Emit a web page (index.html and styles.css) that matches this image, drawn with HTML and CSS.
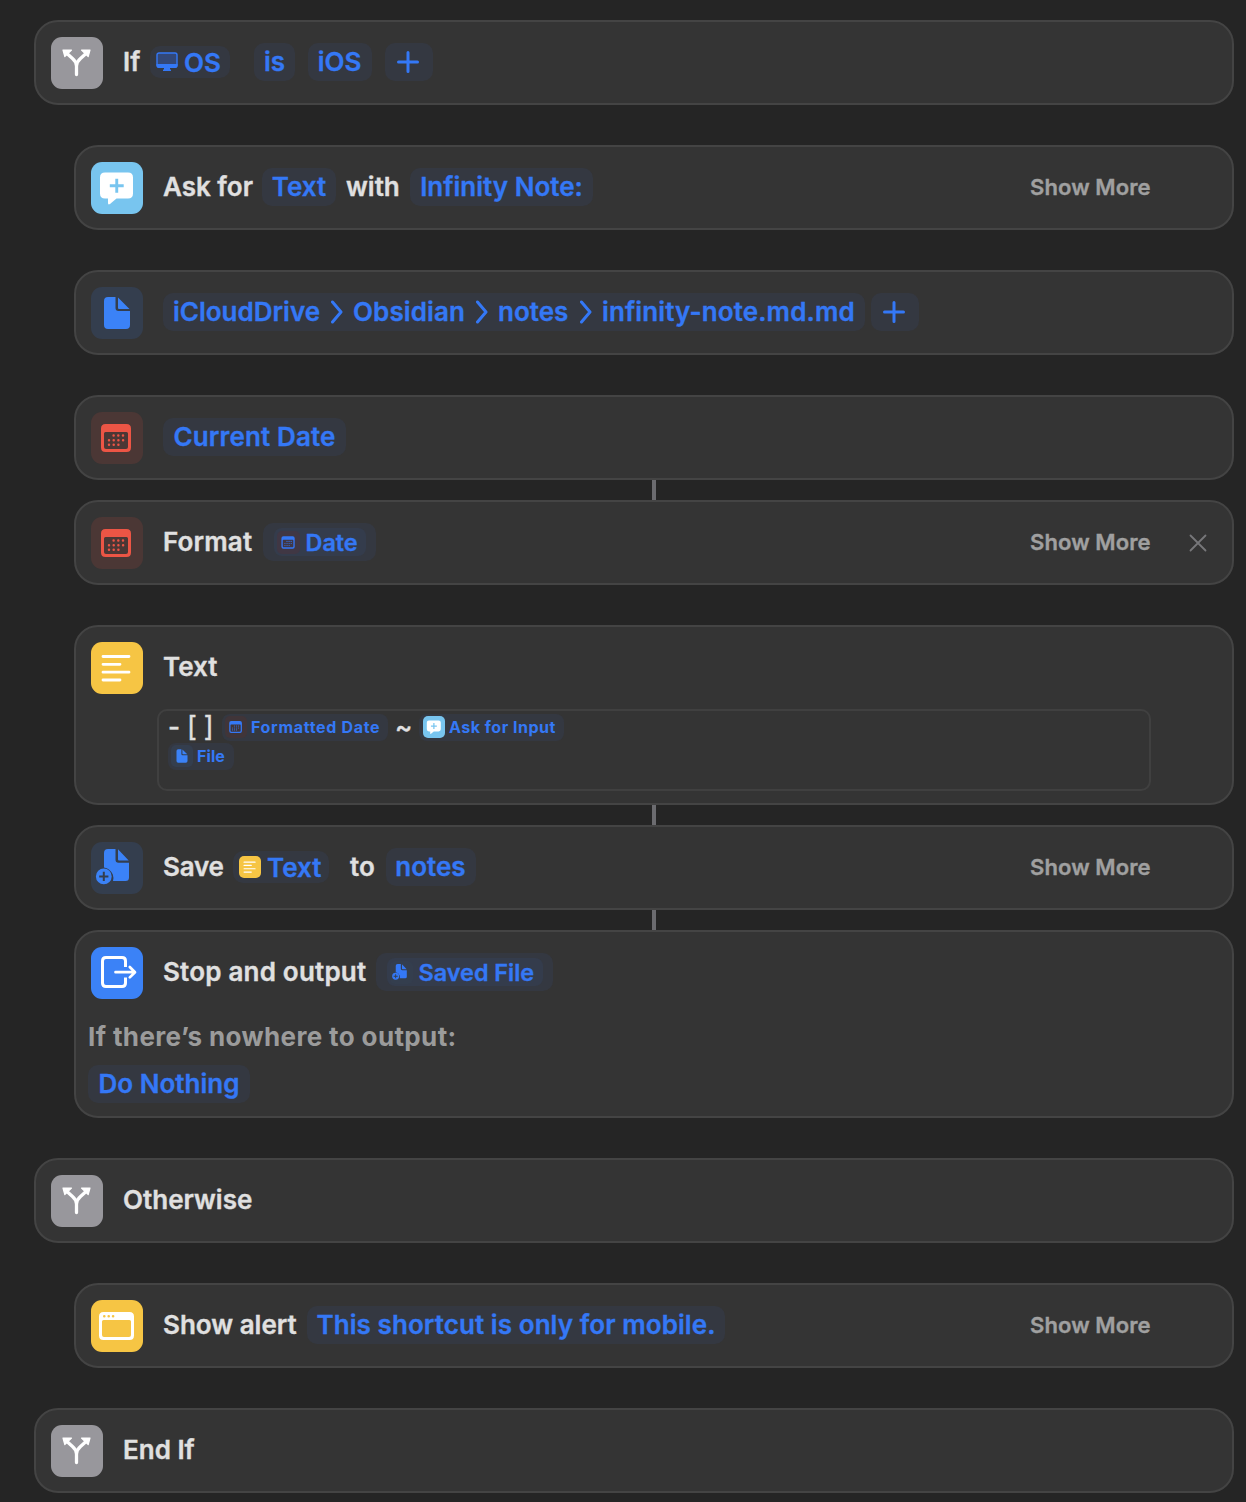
FILE: index.html
```html
<!DOCTYPE html>
<html lang="en">
<head>
<meta charset="utf-8">
<title>Shortcut</title>
<link rel="stylesheet" href="styles.css">
</head>
<body>
<svg class="sprite" aria-hidden="true">
  <symbol id="branch" viewBox="0 0 52 52">
    <path d="M25.5 37.5V29Q25.5 25 21.5 21.500L16.500 17M25.500 29Q25.500 25 29.500 21.500L34.500 17" fill="none" stroke="currentColor" stroke-width="3.300" stroke-linecap="round"/>
    <path d="M12 13H20.500L13.800 19.500ZM39 13H30.500L37.200 19.500Z" fill="currentColor" stroke="currentColor" stroke-width="1.200" stroke-linejoin="round"/>
  </symbol>
  <symbol id="bubble" viewBox="0 0 52 52">
    <path fill="currentColor" fill-rule="evenodd" d="M14 10.500H37Q42 10.500 42 15.500V31.500Q42 36.500 37 36.500H25.500L19 42Q17 43.200 17 41V36.500H14Q9 36.500 9 31.500V15.500Q9 10.500 14 10.500ZM24.300 16.800V22.300H18.800V25.200H24.300V30.700H27.200V25.200H32.700V22.300H27.200V16.800Z"/>
  </symbol>
  <symbol id="doc" viewBox="0 0 52 52">
    <path fill="currentColor" d="M17 10H24.500V21Q24.500 24 27.500 24H39V38Q39 42 35 42H17Q13 42 13 38V14Q13 10 17 10ZM27 10.400L38.500 21.900H28Q27 21.900 27 20.900Z"/>
  </symbol>
  <symbol id="calendar" viewBox="0 0 52 52">
    <path fill="currentColor" fill-rule="evenodd" d="M14.500 12H35.500Q40 12 40 16.500V35.500Q40 40 35.500 40H14.500Q10 40 10 35.500V16.500Q10 12 14.500 12ZM14.500 20Q13 20 13 21.500V35Q13 37 15 37H35Q37 37 37 35V21.500Q37 20 35.500 20Z"/>
    <path d="M22.600 23.500H33M18 28.200H33M18 32.800H28" fill="none" stroke="currentColor" stroke-width="2.500" stroke-linecap="round" stroke-dasharray="0 4.700"/>
  </symbol>
  <symbol id="lines" viewBox="0 0 52 52">
    <path d="M12 14.500H38M12 22.300H29M12 30.200H38M12 38H29" fill="none" stroke="currentColor" stroke-width="2.800" stroke-linecap="round"/>
  </symbol>
  <symbol id="docplus" viewBox="0 0 52 52">
    <path fill="currentColor" d="M17 7H24.500V17.500Q24.500 20.800 27.500 20.800H38V35.500Q38 39 34.500 39H22Q23 36 21.800 32.500Q19 26.500 13 25.500V11Q13 7 17 7ZM27 7.300L37.700 18.500H28Q27 18.500 27 17.500Z"/>
    <path fill="currentColor" fill-rule="evenodd" d="M12.800 26.500A7.900 7.900 0 1 1 12.800 42.300A7.900 7.900 0 1 1 12.800 26.500ZM11.800 29.800V33.400H8.200V35.400H11.800V39H13.800V35.400H17.400V33.400H13.800V29.800Z"/>
  </symbol>
  <symbol id="exit" viewBox="0 0 52 52">
    <path d="M34.500 20V14Q34.500 10.500 31 10.500H15Q11.500 10.500 11.500 14V36Q11.500 39.500 15 39.500H31Q34.500 39.500 34.500 36V30.400" fill="none" stroke="currentColor" stroke-width="3"/>
    <path d="M24.500 25.200H43.500M38.800 20L44 25.200L38.800 30.400" fill="none" stroke="currentColor" stroke-width="2.700" stroke-linecap="round" stroke-linejoin="round"/>
  </symbol>
  <symbol id="window" viewBox="0 0 52 52">
    <path fill="currentColor" fill-rule="evenodd" d="M12.500 12H38.500Q43 12 43 16.500V35.500Q43 40 38.500 40H12.500Q8 40 8 35.500V16.500Q8 12 12.500 12ZM12.500 20Q11 20 11 21.500V35Q11 37 13 37H38Q40 37 40 35V21.500Q40 20 38.500 20Z"/>
    <path d="M13.300 16.200H23" fill="none" stroke="#f6c544" stroke-width="2.600" stroke-linecap="round" stroke-dasharray="0 4.400"/>
  </symbol>
  <symbol id="display" viewBox="0 0 22 20">
    <rect x="1" y="1" width="20" height="14" rx="2" fill="#334878" stroke="currentColor" stroke-width="1.400"/>
    <path fill="currentColor" d="M.5 12H21.500V14Q21.500 16 19.500 16H14V17L15 18V19H7V18L8 17V16H2.500Q.5 16 .5 14Z"/>
  </symbol>
  <symbol id="plus" viewBox="0 0 22 22">
    <path d="M11 1.500V20.500M1.500 11H20.500" fill="none" stroke="currentColor" stroke-width="3" stroke-linecap="round"/>
  </symbol>
  <symbol id="chevron" viewBox="0 0 12 24">
    <path d="M1.500 2L10 12L1.500 22" fill="none" stroke="currentColor" stroke-width="3" stroke-linecap="round" stroke-linejoin="round"/>
  </symbol>
</svg>

<main class="flow">
  <section class="card">
    <header class="row">
      <span class="tile gray"><svg><use href="#branch"/></svg></span>
      <div class="phrase">
        <span class="word w-if">If</span>
        <span class="token variable os"><svg class="display"><use href="#display"/></svg><span>OS</span></span>
        <span class="token is">is</span>
        <span class="token ios">iOS</span>
        <span class="token add"><svg><use href="#plus"/></svg></span>
      </div>
    </header>
  </section>

  <section class="card nested">
    <header class="row">
      <span class="tile sky"><svg><use href="#bubble"/></svg></span>
      <div class="phrase">
        <span class="word w-ask">Ask for</span>
        <span class="token t-text">Text</span>
        <span class="word w-with">with</span>
        <span class="token t-prompt">Infinity Note:</span>
      </div>
      <span class="more">Show More</span>
    </header>
  </section>

  <section class="card nested">
    <header class="row">
      <span class="tile navy"><svg><use href="#doc"/></svg></span>
      <div class="phrase">
        <span class="token path">
          <span class="p-drive">iCloudDrive</span><svg><use href="#chevron"/></svg>
          <span class="p-vault">Obsidian</span><svg><use href="#chevron"/></svg>
          <span class="p-notes">notes</span><svg><use href="#chevron"/></svg>
          <span class="p-file">infinity-note.md.md</span>
        </span>
        <span class="token add tight"><svg><use href="#plus"/></svg></span>
      </div>
    </header>
  </section>

  <section class="card nested">
    <header class="row">
      <span class="tile maroon"><svg><use href="#calendar"/></svg></span>
      <div class="phrase"><span class="token t-current">Current Date</span></div>
    </header>
  </section>
  <div class="link"></div>

  <section class="card nested">
    <header class="row">
      <span class="tile maroon"><svg><use href="#calendar"/></svg></span>
      <div class="phrase">
        <span class="word w-format">Format</span>
        <span class="token wrap t-date"><span class="inner"><span class="tile mini maroon"><svg><use href="#calendar"/></svg></span><span class="label">Date</span></span></span>
      </div>
      <span class="more">Show More</span>
      <svg class="close" viewBox="0 0 18 18"><path d="M1.500 1.500L16.500 16.500M16.500 1.500L1.500 16.500" fill="none" stroke="currentColor" stroke-width="1.800" stroke-linecap="round"/></svg>
    </header>
  </section>

  <section class="card nested text-card">
    <header class="row">
      <span class="tile yellow"><svg><use href="#lines"/></svg></span>
      <div class="phrase"><span class="word">Text</span></div>
    </header>
    <div class="editor">
      <div class="line">
        <span class="dash">-</span><span class="brackets">[ ]</span>
        <span class="chip c-date"><span class="tile mini maroon"><svg><use href="#calendar"/></svg></span><span>Formatted Date</span></span>
        <span class="tilde">~</span>
        <span class="chip c-ask"><span class="tile mini sky"><svg><use href="#bubble"/></svg></span><span>Ask for Input</span></span>
      </div>
      <div class="line second">
        <span class="chip c-file"><span class="tile mini navy"><svg><use href="#doc"/></svg></span><span>File</span></span>
      </div>
    </div>
  </section>
  <div class="link"></div>

  <section class="card nested">
    <header class="row">
      <span class="tile navy"><svg><use href="#docplus"/></svg></span>
      <div class="phrase">
        <span class="word w-save">Save</span>
        <span class="token variable v-text"><span class="tile mini yellow"><svg><use href="#lines"/></svg></span><span>Text</span></span>
        <span class="word w-to">to</span>
        <span class="token t-notes">notes</span>
      </div>
      <span class="more">Show More</span>
    </header>
  </section>
  <div class="link"></div>

  <section class="card nested stop-card">
    <header class="row">
      <span class="tile blue"><svg><use href="#exit"/></svg></span>
      <div class="phrase">
        <span class="word w-stop">Stop and output</span>
        <span class="token wrap t-saved"><span class="inner"><span class="tile mini navy"><svg><use href="#docplus"/></svg></span><span class="label">Saved File</span></span></span>
      </div>
    </header>
    <div class="fallback">
      <span class="note">If there’s nowhere to output:</span>
      <span class="token t-nothing">Do Nothing</span>
    </div>
  </section>

  <section class="card">
    <header class="row">
      <span class="tile gray"><svg><use href="#branch"/></svg></span>
      <div class="phrase"><span class="word">Otherwise</span></div>
    </header>
  </section>

  <section class="card nested">
    <header class="row">
      <span class="tile yellow"><svg><use href="#window"/></svg></span>
      <div class="phrase">
        <span class="word w-alert">Show alert</span>
        <span class="token t-alert">This shortcut is only for mobile.</span>
      </div>
      <span class="more">Show More</span>
    </header>
  </section>

  <section class="card">
    <header class="row">
      <span class="tile gray"><svg><use href="#branch"/></svg></span>
      <div class="phrase"><span class="word">End If</span></div>
    </header>
  </section>
</main>
</body>
</html>
```
FILE: styles.css
```css
* { box-sizing: border-box; }

body {
  margin: 0;
  background: #252525;
  color: #e0e0e0;
  font: 600 26px/38px Inter, "Liberation Sans", sans-serif;
  -webkit-text-stroke: .35px;
  white-space: nowrap;
}

svg { display: block; flex: none; }
.sprite { position: absolute; width: 0; height: 0; }

.flow { display: flex; flex-direction: column; padding: 20px 12px 9px 34px; }

.card {
  height: 85px;
  padding: 15px;
  border: 2px solid #444;
  border-radius: 24px;
  background: #343434;
}
.card + .card { margin-top: 40px; }
.nested { margin-left: 40px; }
.text-card { height: 180px; }
.stop-card { height: 188px; }

.link { width: 4px; height: 20px; margin-left: 618px; background: #6c6c70; }

.row { display: flex; align-items: center; height: 52px; }
.phrase { display: flex; align-items: center; flex: 1; height: 38px; margin: 0 0 2px 20px; }
.word { flex: none; }

.tile { display: block; flex: none; width: 52px; height: 52px; border-radius: 11px; color: #fff; }
.tile svg { width: 100%; height: 100%; }
.gray { background: #98979c; }
.sky { background: #78c5ef; }
.navy { background: #343e4e; color: #3b82f7; }
.maroon { background: #4b3735; color: #ec5545; }
.yellow { background: #f6c544; }
.blue { background: #3b82f7; }

.token {
  display: flex;
  align-items: center;
  justify-content: center;
  flex: none;
  height: 38px;
  border-radius: 10px;
  background: #343841;
  color: #3478f6;
}
.variable { height: 32px; justify-content: flex-start; }
.variable > span:last-child { padding-top: 2px; }

.add { width: 48px; margin-left: 13px; padding-right: 2px; }
.add svg { width: 22px; height: 22px; }
.add.tight { margin-left: 6px; }

.w-if { width: 27px; }
.os { width: 80px; padding-left: 6px; gap: 6px; }
.display { width: 22px; height: 20px; }
.is { width: 41px; margin-left: 24px; }
.ios { width: 64px; margin-left: 13px; padding-right: 1px; }

.w-ask { width: 99px; }
.t-text { width: 74px; }
.w-with { width: 74px; padding-left: 10px; }
.t-prompt { width: 183px; }

.path { width: 702px; padding-left: 10px; justify-content: flex-start; }
.path svg { width: 12px; height: 24px; margin-right: 10px; }
.p-drive { width: 158px; }
.p-vault { width: 123px; letter-spacing: .1px; }
.p-notes { width: 82px; }
.p-file { letter-spacing: .12px; }

.t-current { width: 183px; letter-spacing: .15px; }

.w-format { width: 100px; letter-spacing: .15px; }
.wrap { font-size: 23.400px; }
.inner { display: flex; align-items: center; gap: 6px; height: 28px; padding-left: 3px; border-radius: 8px; background: #343c4c; }
.label { padding-top: 2px; }
.t-date { width: 113px; }
.t-date .inner { width: 92px; }
.t-saved { width: 177px; }
.t-saved .inner { width: 156px; }

.mini { width: 22px; height: 22px; border-radius: 5px; }
.inner .mini { width: 23px; height: 23px; color: #3478f6; }
.inner .maroon { background: #403744; }

.more { flex: none; width: 120px; margin-right: 67px; margin-bottom: 2px; color: #a0a0a0; font-size: 22px; letter-spacing: .1px; }
.more:has(+ .close) { margin-right: 39px; }
.close { width: 18px; height: 18px; margin-right: 10px; color: #77777a; }

.editor {
  width: 994px;
  height: 82px;
  margin: 15px 0 0 66px;
  padding: 2px 10px;
  border: 2px solid #404040;
  border-radius: 10px;
  font-weight: 400;
}
.line { display: flex; align-items: center; height: 28px; }
.line.second { margin-top: 1px; }
.dash { width: 19px; margin-left: -1px; font-weight: 500; }
.brackets { width: 35px; font-size: 27px; letter-spacing: -.3px; }
.tilde { width: 31px; padding-left: 7px; font-weight: 500; }
.chip {
  display: flex;
  align-items: center;
  gap: 4px;
  height: 27px;
  padding-left: 3px;
  border-radius: 8px;
  background: #343841;
  color: #3478f6;
  font-size: 16px;
  font-weight: 700;
  letter-spacing: .68px;
  -webkit-text-stroke: 0;
}
.chip .maroon { color: #3478f6; background: #403539; }
.c-date { width: 166px; }
.c-ask { width: 145px; padding-left: 4px; letter-spacing: .5px; }
.c-file { width: 66px; margin-left: -1px; letter-spacing: .1px; }

.w-save { width: 70px; letter-spacing: -.2px; }
.v-text { width: 96px; padding-left: 6px; gap: 6px; }
.w-to { width: 57px; padding-left: 21px; }
.t-notes { width: 90px; padding-right: 1px; }

.w-stop { width: 213px; letter-spacing: .2px; }
.fallback { display: flex; flex-direction: column; gap: 9px; margin: 19px 0 0 -3px; }
.note { color: #9b9b9b; font-weight: 700; -webkit-text-stroke: 0; letter-spacing: .37px; }
.t-nothing { width: 162px; }

.w-alert { width: 144px; }
.t-alert { width: 418px; letter-spacing: .08px; }
```
